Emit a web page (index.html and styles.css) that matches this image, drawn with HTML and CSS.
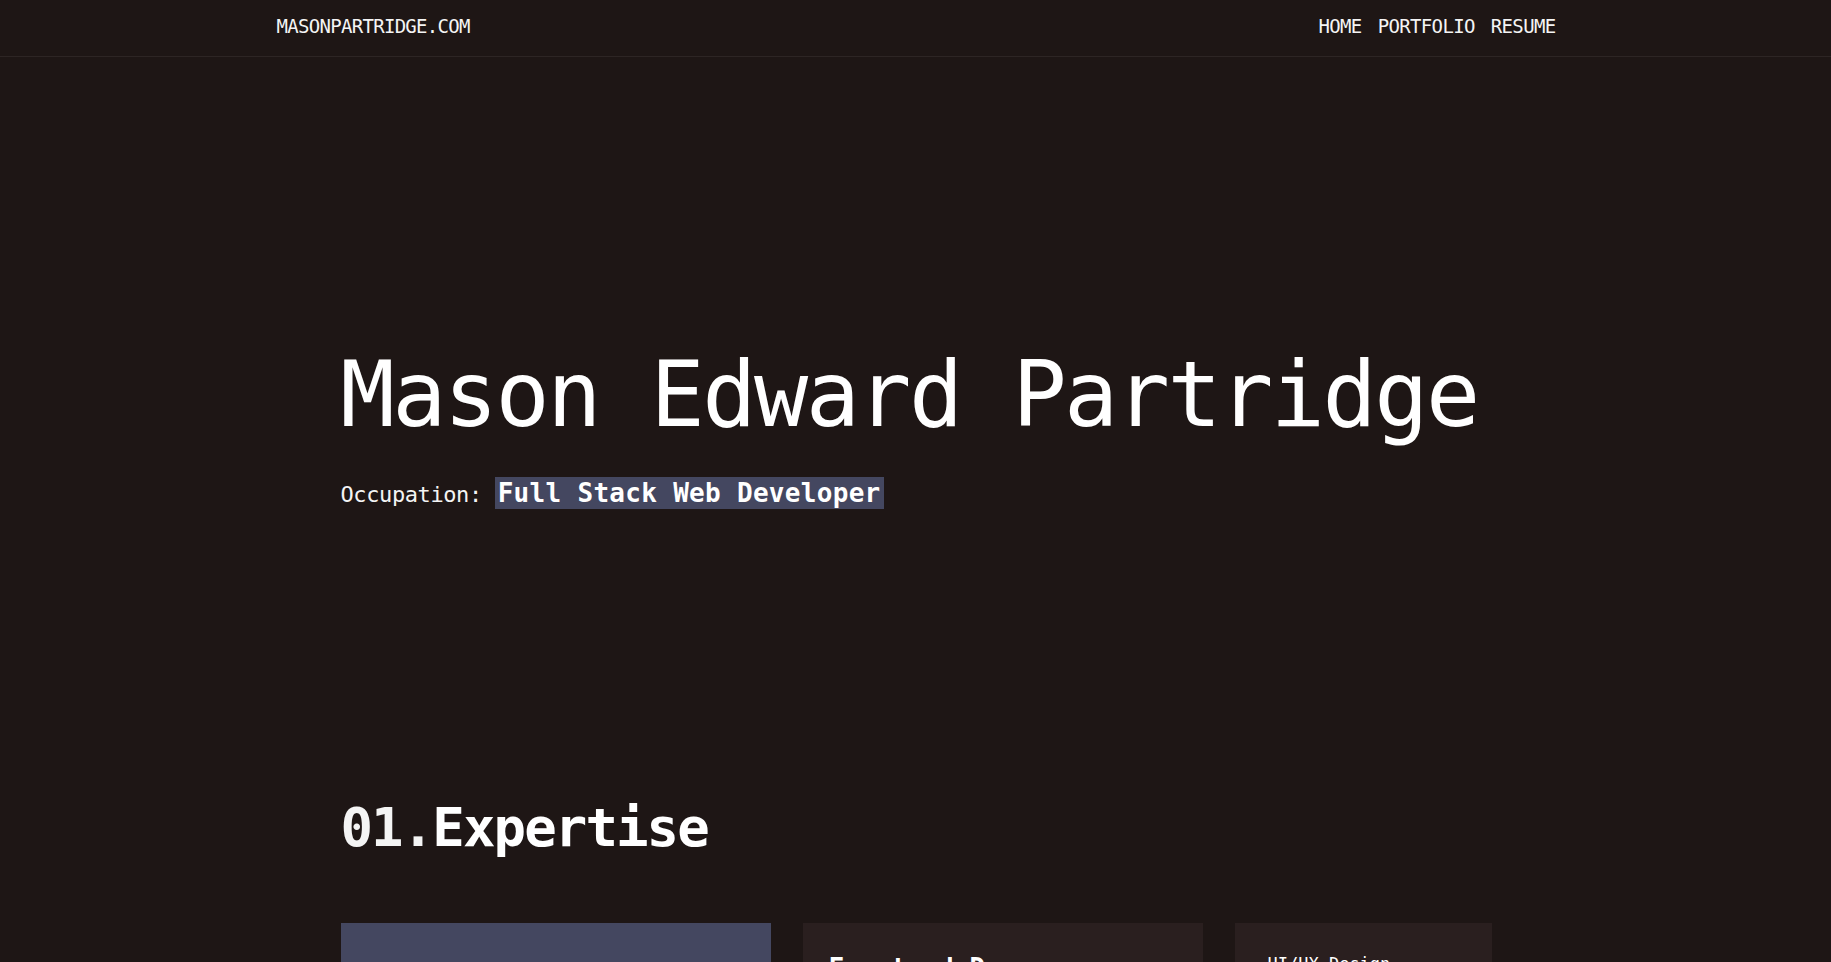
FILE: index.html
```html
<!DOCTYPE html>
<html lang="en">
<head>
<meta charset="utf-8">
<title>Mason Edward Partridge</title>
<link rel="stylesheet" href="styles.css">
</head>
<body>
<header class="site-header">
  <div class="header-inner">
    <a class="logo" href="#">MASONPARTRIDGE.COM</a>
    <nav class="nav">
      <a href="#">HOME</a>
      <a href="#">PORTFOLIO</a>
      <a href="#">RESUME</a>
    </nav>
  </div>
</header>
<main class="container">
  <section class="hero">
    <h1 class="hero-title">Mason Edward Partridge</h1>
    <p class="occupation">Occupation: <span class="occupation-value">Full Stack Web Developer</span></p>
  </section>
  <section class="expertise">
    <h2 class="section-title"><span class="num">01.</span>Expertise</h2>
    <div class="cards">
      <div class="card card-accent">
        <h3 class="card-title-lg">Software Development</h3>
        <p class="card-text">Experienced in both functional and OOP: Dart, Python, Java, JavaScript, TypeScript.</p>
      </div>
      <div class="card card-dark card-mid">
        <h3 class="card-title-lg">Frontend Dev</h3>
        <p class="card-text">React, NextJS, HTML, CSS, Tailwind.</p>
      </div>
      <div class="card card-dark card-small">
        <h3 class="card-title-sm">UI/UX Design</h3>
        <p class="card-text">Figma, wireframes, prototypes.</p>
      </div>
    </div>
  </section>
</main>
</body>
</html>
```

FILE: styles.css
```css
* { box-sizing: border-box; }
html, body { margin: 0; padding: 0; }
body {
  background: #1e1615;
  color: #ffffff;
  font-family: "DejaVu Sans Mono", "Liberation Mono", monospace;
  min-height: 100vh;
}
a { color: inherit; text-decoration: none; }

.site-header {
  height: 57px;
  border-bottom: 1px solid #2d2524;
}
.header-inner {
  width: 1280px;
  margin: 0 auto;
  height: 56px;
  display: flex;
  align-items: center;
  justify-content: space-between;
  padding: 0 0 5px 1px;
}
.logo {
  font-size: 19px;
  letter-spacing: -0.7px;
  color: #f4f4f4;
}
.nav {
  display: flex;
  gap: 16px;
  padding-right: 0;
}
.nav a {
  font-size: 19px;
  letter-spacing: -0.65px;
  color: #f4f4f4;
}

.container {
  width: 1150px;
  margin: 0 auto;
}
.hero {
  padding-top: 293px;
}
.hero-title {
  margin: 0;
  font-size: 90px;
  line-height: 90px;
  font-weight: normal;
  letter-spacing: -2.5px;
  white-space: nowrap;
}
.occupation {
  margin: 36px 0 0 0;
  font-size: 22px;
  line-height: 34px;
  letter-spacing: -0.4px;
  color: #f4f4f4;
}
.occupation-value {
  font-size: 26px;
  font-weight: bold;
  letter-spacing: 0.3px;
  background: #444760;
  color: #ffffff;
  padding: 1px 3px;
  margin-left: 0;
}

.expertise {
  padding-top: 286px;
}
.section-title {
  margin: 0;
  font-size: 54px;
  line-height: 60px;
  font-weight: bold;
  letter-spacing: -1.9px;
}
.num { color: #f4f4f4; }

.cards {
  margin-top: 65px;
  display: grid;
  grid-template-columns: 430px 400px 257px;
  gap: 32px;
  align-items: start;
}
.card {
  min-height: 260px;
}
.card-accent {
  background: #444760;
  padding: 70px 28px 28px;
}
.card-dark {
  background: #2a1f1f;
}
.card-mid {
  padding: 30px 26px 26px;
}
.card-small {
  padding: 30px 33px 26px;
}
.card-title-lg {
  margin: 0;
  font-size: 26px;
  line-height: 30px;
  font-weight: bold;
}
.card-title-sm {
  margin: 0;
  font-size: 17px;
  line-height: 22px;
  font-weight: normal;
}
.card-text {
  margin: 14px 0 0;
  font-size: 16px;
  line-height: 24px;
  color: #d8d4d4;
}
```
